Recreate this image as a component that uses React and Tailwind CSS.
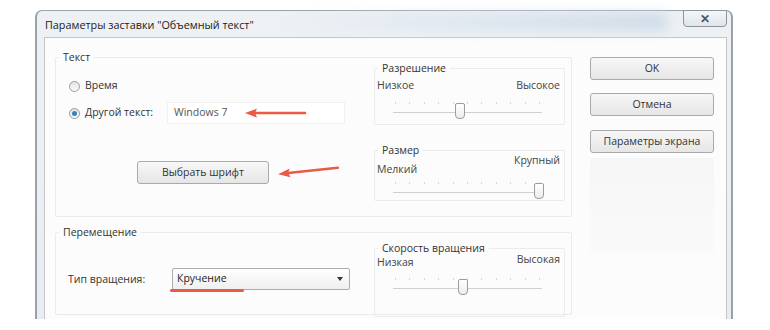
import React from "react";

const font = { fontFamily: '"Open Sans", "Noto Sans", sans-serif' };

function Radio({ checked }) {
  return (
    <span className="w-[11px] h-[11px] rounded-full border border-[#9a9a9a] bg-gradient-to-b from-[#e4e4e4] to-[#fafafa] flex items-center justify-center shrink-0">
      {checked && <span className="w-[5px] h-[5px] rounded-full bg-[#3a7fc1]" />}
    </span>
  );
}

function Button({ children, className = "" }) {
  return (
    <div className={`h-[23px] border border-[#a9a9a9] rounded-[3px] bg-gradient-to-b from-[#f7f7f7] to-[#e6e6e6] flex items-center justify-center text-[#333] ${className}`}>
      {children}
    </div>
  );
}

// trackbar: thin line, row of tick dots, thumb at pos 0..1
function Track({ pos, className = "" }) {
  return (
    <div className={`relative h-[22px] ml-[18px] mr-[22px] ${className}`}>
      <div className="flex justify-between pt-[2px] px-[2px]">
        {Array.from({ length: 11 }).map((_, i) => (
          <span key={i} className="w-[1px] h-[2px] bg-[#d6d6d6]" />
        ))}
      </div>
      <div className="h-[1px] bg-[#d0d0d0] mt-[8px]" />
      <div
        className="absolute top-[3px] w-[10px] h-[16px] border border-[#9c9c9c] rounded-b-[4px] rounded-t-[2px] bg-gradient-to-b from-white to-[#ececec]"
        style={{ left: `calc(${pos * 100}% - 5px)` }}
      />
    </div>
  );
}

function Box({ legend, children, className = "" }) {
  return (
    <fieldset className={`border border-[#ebebeb] rounded-[2px] ${className}`}>
      <legend className="ml-[3px] px-[4px] text-[#333] leading-[14px]">{legend}</legend>
      {children}
    </fieldset>
  );
}

function Arrow({ className }) {
  return (
    <svg className={className} width="64" height="12" viewBox="0 0 64 12">
      <path d="M62 6 L12 6" stroke="#ea5a45" strokeWidth="2.5" strokeLinecap="round" />
      <path d="M2 6 L14 1.5 L12 6 L14 10.5 Z" fill="#ea5a45" />
    </svg>
  );
}

export default function App() {
  return (
    <div className="relative w-[770px] h-[330px] bg-white overflow-hidden text-[10.5px]" style={font}>
      <div className="pl-[35px] pt-[10px]">
        <div className="w-[698px] h-[309px] border-l-2 border-t border-r-2 border-[#9aa1aa] rounded-t-[7px] bg-gradient-to-b from-[#eef1f4] to-[#e9edf1] flex flex-col">
          {/* title bar */}
          <div className="h-[26px] flex items-start justify-between relative">
            <div className="absolute left-[250px] top-[2px] w-[380px] h-[18px] bg-gradient-to-r from-transparent via-[#dde6f0] to-[#cfdbe8] blur-[6px]" />
            <span className="relative pl-[8px] pt-[6px] text-[10.8px] text-[#1a1a1a]">Параметры заставки "Объемный текст"</span>
            <div className="relative mr-[4px] -mt-[1px] w-[44px] h-[17px] border border-[#8d939b] rounded-b-[4px] bg-gradient-to-b from-[#f4f6f8] to-[#dfe5ec] flex items-center justify-center text-[#555] text-[12px] font-bold leading-none">
              ✕
            </div>
          </div>
          {/* client area */}
          <div className="flex-1 ml-[7px] mr-[4px] border-l border-t border-r border-[#c6c6c6] bg-[#fcfcfc] flex">
            <div className="pl-[10px] pt-[12px] flex flex-col gap-[8px]">
              <Box legend="Текст" className="w-[517px] h-[167px]">
                <div className="grid grid-cols-[318px_191px] -mt-[2px]">
                  <div className="pl-[13px] flex flex-col">
                    <div className="flex items-center gap-[5px] h-[20px] mt-[14px] text-[#333]">
                      <Radio />
                      <span>Время</span>
                    </div>
                    <div className="flex items-center h-[22px] mt-[6px] text-[#333]">
                      <Radio checked />
                      <span className="ml-[5px] w-[82px]">Другой текст:</span>
                      <div className="w-[178px] h-[22px] bg-white border border-[#f0f0f0] flex items-center pl-[6px] text-[#555]">Windows 7</div>
                    </div>
                    <Button className="w-[132px] ml-[68px] mt-[37px]">Выбрать шрифт</Button>
                  </div>
                  <div className="flex flex-col gap-[18px]">
                    <Box legend="Разрешение" className="h-[64px] -mt-[1px]">
                      <div className="flex justify-between pl-[2px] pr-[4px] text-[#444] mt-[3px]">
                        <span>Низкое</span>
                        <span>Высокое</span>
                      </div>
                      <Track pos={0.45} className="mt-[6px]" />
                    </Box>
                    <Box legend="Размер" className="h-[58px]">
                      <div className="flex justify-between items-start pl-[2px] pr-[4px] text-[#444] -mt-[4px]">
                        <span className="mt-[9px]">Мелкий</span>
                        <span>Крупный</span>
                      </div>
                      <Track pos={0.98} className="mt-[2px]" />
                    </Box>
                  </div>
                </div>
              </Box>
              <Box legend="Перемещение" className="w-[517px] h-[90px]">
                <div className="grid grid-cols-[318px_191px]">
                  <div className="flex items-start pl-[12px] pt-[29px] text-[#333]">
                    <span className="w-[104px] pt-[4px]">Тип вращения:</span>
                    <div className="w-[178px] h-[22px] border border-[#adadad] rounded-[2px] bg-gradient-to-b from-white to-[#efefef] flex items-center justify-between pl-[4px] pr-[6px] text-[#222]">
                      <span>Кручение</span>
                      <span className="w-0 h-0 border-l-[3.5px] border-r-[3.5px] border-t-[4px] border-l-transparent border-r-transparent border-t-[#333]" />
                    </div>
                  </div>
                  <Box legend="Скорость вращения" className="h-[76px] mt-[2px]">
                    <div className="flex justify-between items-start pl-[2px] pr-[4px] text-[#444] -mt-[3px]">
                      <span className="mt-[3px]">Низкая</span>
                      <span>Высокая</span>
                    </div>
                    <Track pos={0.47} className="mt-[5px]" />
                  </Box>
                </div>
              </Box>
            </div>
            <div className="ml-[18px] pt-[19px] flex flex-col w-[124px]">
              <Button>OK</Button>
              <Button className="mt-[13px]">Отмена</Button>
              <Button className="mt-[14px]">Параметры экрана</Button>
              <div className="mt-[5px] h-[95px] bg-gradient-to-b from-[#f6f6f6] to-[#fafafa]" />
            </div>
          </div>
        </div>
      </div>
      {/* red annotations */}
      <Arrow className="absolute left-[243px] top-[107px]" />
      <Arrow className="absolute left-[276px] top-[165px] -rotate-[6deg]" />
      <div className="absolute left-[170px] top-[289px] w-[74px] h-[3px] rounded-full bg-[#ea5a45]" />
    </div>
  );
}
